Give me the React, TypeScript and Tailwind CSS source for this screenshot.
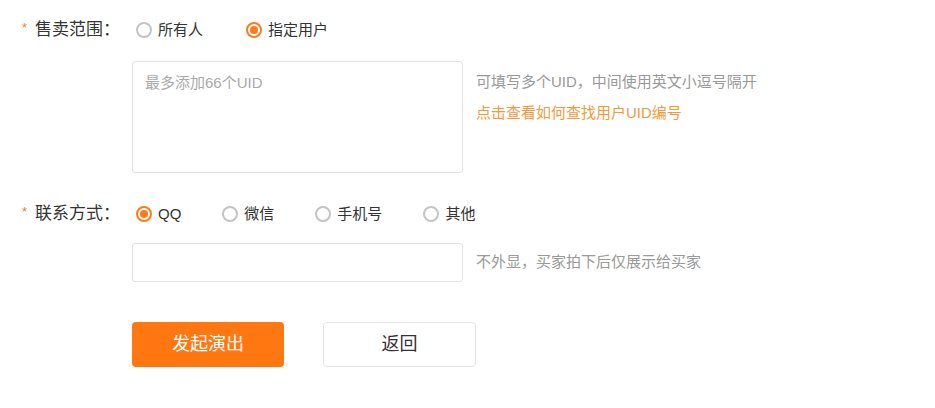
import * as React from 'react';
import { useState } from 'react';

const font = "font-['Liberation_Sans','Noto_Sans_CJK_SC',sans-serif]";

type RadioProps = {
  label: string;
  checked: boolean;
  onClick: () => void;
};

function Radio({ label, checked, onClick }: RadioProps) {
  return (
    <div className="flex items-center cursor-pointer" onClick={onClick}>
      {checked ? (
        <span className="w-[16px] h-[16px] rounded-full border-2 border-[#ff7a1a] flex items-center justify-center">
          <span className="w-[8px] h-[8px] rounded-full bg-[#ff7a1a]" />
        </span>
      ) : (
        <span className="w-[16px] h-[16px] rounded-full border-2 border-[#c4c4c4]" />
      )}
      <span className="ml-[6px] text-[15px] text-[#333]">{label}</span>
    </div>
  );
}

function Label({ text }: { text: string }) {
  return (
    <div className="w-[110px] flex items-center">
      <span className="text-[#ff7a1a] text-[13px] mr-[8px] -mt-[4px]">*</span>
      <span className="text-[17px] text-[#333]">{text}：</span>
    </div>
  );
}

export default function App() {
  const [scope, setScope] = useState('指定用户');
  const [contact, setContact] = useState('QQ');

  return (
    <div className={`${font} w-[935px] h-[408px] bg-white pl-[22px] pt-[18px]`}>
      {/* 售卖范围 */}
      <div className="flex items-center h-[24px]">
        <Label text="售卖范围" />
        <div className="flex items-center gap-[43px] pl-[4px]">
          {['所有人', '指定用户'].map((s) => (
            <Radio key={s} label={s} checked={scope === s} onClick={() => setScope(s)} />
          ))}
        </div>
      </div>

      <div className="flex mt-[19px] pl-[110px]">
        <textarea
          className="w-[331px] h-[112px] border border-[#e3e3e3] rounded-[3px] px-[12px] pt-[11px] text-[15px] leading-[20px] text-[#333] placeholder:text-[#aaa] resize-none outline-none"
          placeholder="最多添加66个UID"
        />
        <div className="ml-[13px] pt-[11px] flex flex-col gap-[11px] text-[15px] leading-[20px]">
          <p className="text-[#999]">可填写多个UID，中间使用英文小逗号隔开</p>
          <p className="text-[#f09a3c] cursor-pointer">点击查看如何查找用户UID编号</p>
        </div>
      </div>

      {/* 联系方式 */}
      <div className="flex items-center h-[24px] mt-[29px]">
        <Label text="联系方式" />
        <div className="flex items-center gap-[41px] pl-[4px]">
          {['QQ', '微信', '手机号', '其他'].map((s) => (
            <Radio key={s} label={s} checked={contact === s} onClick={() => setContact(s)} />
          ))}
        </div>
      </div>

      <div className="flex items-center mt-[17px] pl-[110px]">
        <input className="w-[331px] h-[39px] border border-[#e3e3e3] rounded-[3px] px-[12px] text-[15px] outline-none" />
        <p className="ml-[13px] text-[15px] text-[#999]">不外显，买家拍下后仅展示给买家</p>
      </div>

      <div className="flex mt-[40px] pl-[110px] gap-[39px]">
        <button className="w-[152px] h-[45px] rounded-[4px] bg-[#ff7711] text-white text-[18px]">发起演出</button>
        <button className="w-[153px] h-[45px] rounded-[4px] bg-white border border-[#e5e5e5] text-[#333] text-[18px]">返回</button>
      </div>
    </div>
  );
}
